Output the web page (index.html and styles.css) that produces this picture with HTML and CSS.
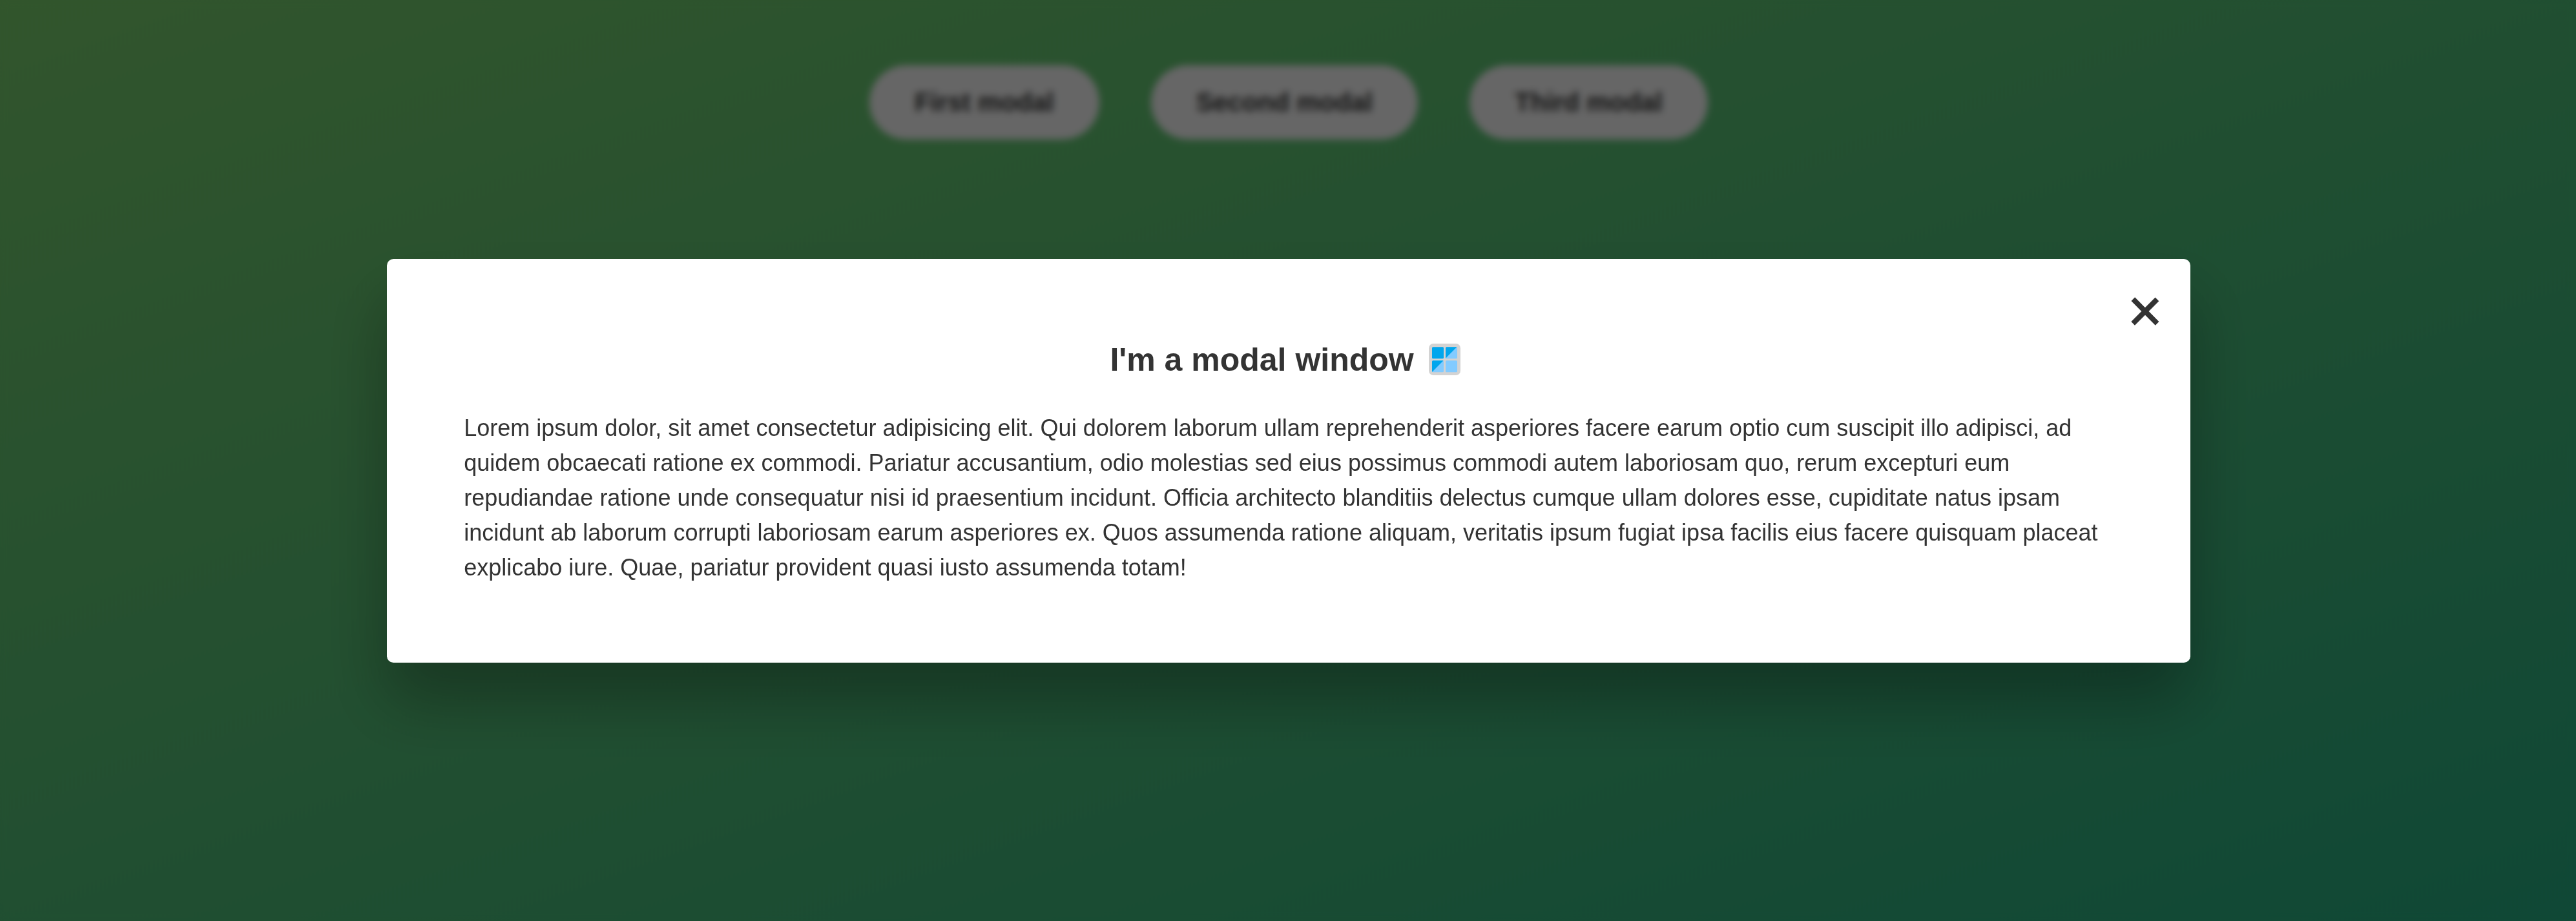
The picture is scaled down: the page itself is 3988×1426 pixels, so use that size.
FILE: index.html
```html
<!DOCTYPE html>
<html lang="en">
<head>
<meta charset="UTF-8">
<title>Modal window</title>
<link rel="stylesheet" href="styles.css">
</head>
<body>
<button class="show-modal">First modal</button>
<button class="show-modal">Second modal</button>
<button class="show-modal">Third modal</button>

<div class="overlay">
  <div class="modal">
    <button class="close-modal">&times;</button>
    <h1>I'm a modal window <svg class="window-icon" viewBox="0 0 49 49" aria-hidden="true">
      <rect width="49" height="49" rx="7" fill="#d3d3d3"/>
      <rect x="5" y="5.3" width="18" height="18" rx="1.5" fill="#00a6ed"/>
      <rect x="26" y="5.3" width="18" height="18" rx="1.5" fill="#83cbff"/>
      <path d="M27.500 5.300H43.400L26 22.700V6.800a1.500 1.500 0 0 1 1.500-1.500z" fill="#00a6ed"/>
      <rect x="5" y="26.300" width="18" height="18" rx="1.500" fill="#83cbff"/>
      <path d="M6.500 26.300H22.600L5.300 43.800 5 42.800V27.800a1.500 1.500 0 0 1 1.500-1.500z" fill="#00a6ed"/>
      <rect x="26" y="26.300" width="18" height="18" rx="1.500" fill="#83cbff"/>
    </svg></h1>
    <p>Lorem ipsum dolor, sit amet consectetur adipisicing elit. Qui dolorem laborum ullam reprehenderit asperiores facere earum optio cum suscipit illo adipisci, ad quidem obcaecati ratione ex commodi. Pariatur accusantium, odio molestias sed eius possimus commodi autem laboriosam quo, rerum excepturi eum repudiandae ratione unde consequatur nisi id praesentium incidunt. Officia architecto blanditiis delectus cumque ullam dolores esse, cupiditate natus ipsam incidunt ab laborum corrupti laboriosam earum asperiores ex. Quos assumenda ratione aliquam, veritatis ipsum fugiat ipsa facilis eius facere quisquam placeat explicabo iure. Quae, pariatur provident quasi iusto assumenda totam!</p>
  </div>
</div>
</body>
</html>
```
FILE: styles.css
```css
* {
  margin: 0;
  padding: 0;
  box-sizing: border-box;
}

html {
  font-size: 20px;
}

body {
  height: 100vh;
  padding: 1px 0 0 2px;
  display: flex;
  align-items: flex-start;
  justify-content: center;
  font-family: "Liberation Sans", Arial, sans-serif;
  line-height: 1.5;
  color: #333;
  background: linear-gradient(to top left, #28b487, #7dd56f);
  overflow: hidden;
}

.show-modal {
  margin: 5rem 2rem;
  padding: 1.75rem 3.5rem;
  border: none;
  border-radius: 10rem;
  background: #fff;
  color: #333;
  font-family: inherit;
  font-size: 2rem;
  font-weight: 600;
  cursor: pointer;
}

.overlay {
  position: fixed;
  inset: 0;
  display: flex;
  align-items: center;
  justify-content: center;
  background: rgba(0, 0, 0, 0.6);
  backdrop-filter: blur(6px);
}

.modal {
  position: relative;
  width: 70%;
  margin: 1px 0 0 2px;
  padding: 6rem 6rem 6rem 119px;
  border-radius: 10px;
  background: #fff;
  box-shadow: 0 3rem 5rem rgba(0, 0, 0, 0.3);
}

.modal h1 {
  margin: -1px 0 41px 1px;
  font-size: 2.5rem;
  text-align: center;
}

.window-icon {
  width: 49px;
  height: 49px;
  margin: -10px 11px -7px 9px;
  vertical-align: baseline;
}

.modal p {
  font-size: 1.8rem;
}

.close-modal {
  position: absolute;
  top: 28px;
  right: 43px;
  border: none;
  background: none;
  color: #333;
  font-family: inherit;
  font-size: 92px;
  -webkit-text-stroke: 1.4px #333;
  cursor: pointer;
}
```
